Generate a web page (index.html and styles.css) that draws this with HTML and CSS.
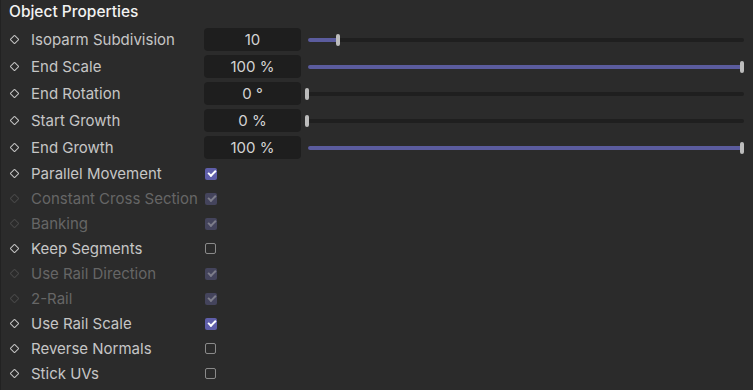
FILE: index.html
```html
<!DOCTYPE html>
<html lang="en">
<head>
  <meta charset="UTF-8">
  <title>Object Properties</title>
  <link rel="stylesheet" href="styles.css">
</head>
<body>
  <div class="panel">
    <h2 class="title">Object Properties</h2>

    <div class="props">
      <div class="row slider-row">
        <span class="dot"></span>
        <span class="label">Isoparm Subdivision</span>
        <span class="field">10</span>
        <div class="track"><div class="fill" style="width: 7%"></div><span class="knob"></span></div>
      </div>
      <div class="row slider-row">
        <span class="dot"></span>
        <span class="label">End Scale</span>
        <span class="field">100 %</span>
        <div class="track"><div class="fill" style="width: 100%"></div><span class="knob"></span></div>
      </div>
      <div class="row slider-row">
        <span class="dot"></span>
        <span class="label">End Rotation</span>
        <span class="field">0 °</span>
        <div class="track"><div class="fill" style="width: 0%"></div><span class="knob"></span></div>
      </div>
      <div class="row slider-row">
        <span class="dot"></span>
        <span class="label">Start Growth</span>
        <span class="field">0 %</span>
        <div class="track"><div class="fill" style="width: 0%"></div><span class="knob"></span></div>
      </div>
      <div class="row slider-row">
        <span class="dot"></span>
        <span class="label">End Growth</span>
        <span class="field">100 %</span>
        <div class="track"><div class="fill" style="width: 100%"></div><span class="knob"></span></div>
      </div>

      <div class="row check-row">
        <span class="dot"></span>
        <span class="label">Parallel Movement</span>
        <span class="box checked"></span>
      </div>
      <div class="row check-row disabled">
        <span class="dot"></span>
        <span class="label">Constant Cross Section</span>
        <span class="box checked"></span>
      </div>
      <div class="row check-row disabled">
        <span class="dot"></span>
        <span class="label">Banking</span>
        <span class="box checked"></span>
      </div>
      <div class="row check-row">
        <span class="dot"></span>
        <span class="label">Keep Segments</span>
        <span class="box"></span>
      </div>
      <div class="row check-row disabled">
        <span class="dot"></span>
        <span class="label">Use Rail Direction</span>
        <span class="box checked"></span>
      </div>
      <div class="row check-row disabled">
        <span class="dot"></span>
        <span class="label">2-Rail</span>
        <span class="box checked"></span>
      </div>
      <div class="row check-row">
        <span class="dot"></span>
        <span class="label">Use Rail Scale</span>
        <span class="box checked"></span>
      </div>
      <div class="row check-row">
        <span class="dot"></span>
        <span class="label">Reverse Normals</span>
        <span class="box"></span>
      </div>
      <div class="row check-row">
        <span class="dot"></span>
        <span class="label">Stick UVs</span>
        <span class="box"></span>
      </div>
    </div>
  </div>
</body>
</html>
```

FILE: styles.css
```css
html, body {
  margin: 0;
  height: 100%;
  background: #2b2b2b;
}

body {
  font-family: Inter, "Noto Sans", sans-serif;
  color: #c6c6c6;
  overflow: hidden;
}

.panel {
  height: 100%;
  border-left: 1px solid #222;
  padding: 0 0 0 7px;
}

.title {
  margin: 0;
  padding: 2px 0 0 1px;
  height: 24px;
  font-size: 15.5px;
  font-weight: 500;
  color: #f2f2f2;
  line-height: 20px;
}

.props {
  display: flex;
  flex-direction: column;
}

.row {
  display: flex;
  align-items: center;
}

.slider-row {
  height: 27px;
}

.check-row {
  height: 25px;
}

.dot {
  width: 5px;
  height: 5px;
  margin: 0 13px 0 3px;
  border: 1.4px solid #c4c4c4;
  transform: rotate(45deg);
  border-radius: 1px;
  flex: none;
}

.label {
  width: 173px;
  font-size: 15px;
  white-space: nowrap;
}

.disabled .label {
  color: #666;
}

.disabled .dot {
  border-color: #474747;
}

.field {
  width: 97px;
  height: 23px;
  border-radius: 4px;
  background: #1e1e1e;
  text-align: center;
  line-height: 23px;
  font-size: 15px;
  color: #d4d4d4;
  flex: none;
}

.track {
  margin-left: 7px;
  width: 436px;
  height: 4px;
  border-radius: 2px;
  background: #1f1f1f;
  display: flex;
  align-items: center;
}

.fill {
  height: 4px;
  border-radius: 2px;
  background: #5b5c9e;
}

.knob {
  width: 4px;
  height: 12px;
  margin-left: -3px;
  border-radius: 2px;
  background: #bcbcbc;
  flex: none;
}

.box {
  width: 9px;
  height: 9px;
  margin-left: 1px;
  border: 1.5px solid #8a8a8a;
  border-radius: 2px;
  position: relative;
}

.box.checked {
  width: 12px;
  height: 12px;
  border: none;
  background: #5f5ea9;
}

.box.checked::after {
  content: '';
  position: absolute;
  left: 3px;
  top: 2.5px;
  width: 6px;
  height: 3px;
  border-left: 2px solid #fff;
  border-bottom: 2px solid #fff;
  transform: rotate(-45deg);
}

.disabled .box.checked {
  background: #44445c;
}

.disabled .box.checked::after {
  border-color: #7d7d8a;
}
```
